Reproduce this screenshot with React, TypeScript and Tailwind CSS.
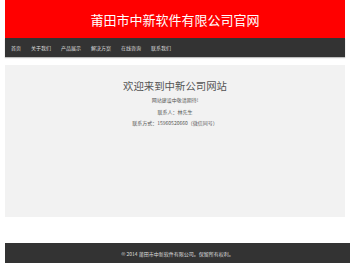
import React from 'react';

const navItems = ['首页', '关于我们', '产品展示', '解决方案', '在线咨询', '联系我们'];

export default function App() {
  return (
    <div className="h-[263px] overflow-hidden bg-white font-['Noto_Sans_CJK_SC',sans-serif]">
      {/* Header */}
      <header className="mx-[5px] flex h-[38px] items-center justify-center bg-[#ff0000]">
        <h1 className="text-[13px] leading-none text-white">莆田市中新软件有限公司官网</h1>
      </header>

      {/* Nav */}
      <nav className="mx-[5px] flex h-[19px] items-center bg-[#333333] pl-[1px] shadow-[0_1px_1px_rgba(0,0,0,0.25)]">
        {navItems.map(item => (
          <a key={item} className="px-[5px] text-[5px] leading-none text-[#dddddd]">
            {item}
          </a>
        ))}
      </nav>

      {/* Main */}
      <main className="mx-[5px] mt-[8px] flex h-[152px] flex-col items-center bg-[#f2f2f2] pt-[16px] text-[#555555]">
        <h2 className="text-[10.4px] leading-none">欢迎来到中新公司网站</h2>
        <p className="mt-[6px] text-[5px] leading-none">网站建设中敬请期待!</p>
        <p className="mt-[7px] text-[5px] leading-none">联系人：林先生</p>
        <p className="mt-[6px] text-[5px] leading-none">联系方式：15960520660（微信同号）</p>
      </main>

      {/* Footer */}
      <footer className="ml-[5px] mt-[26px] flex h-[20px] items-center justify-center bg-[#333333]">
        <p className="text-[5px] leading-none text-[#dddddd]">© 2014 莆田市中新软件有限公司。保留所有权利。</p>
      </footer>
    </div>
  );
}
